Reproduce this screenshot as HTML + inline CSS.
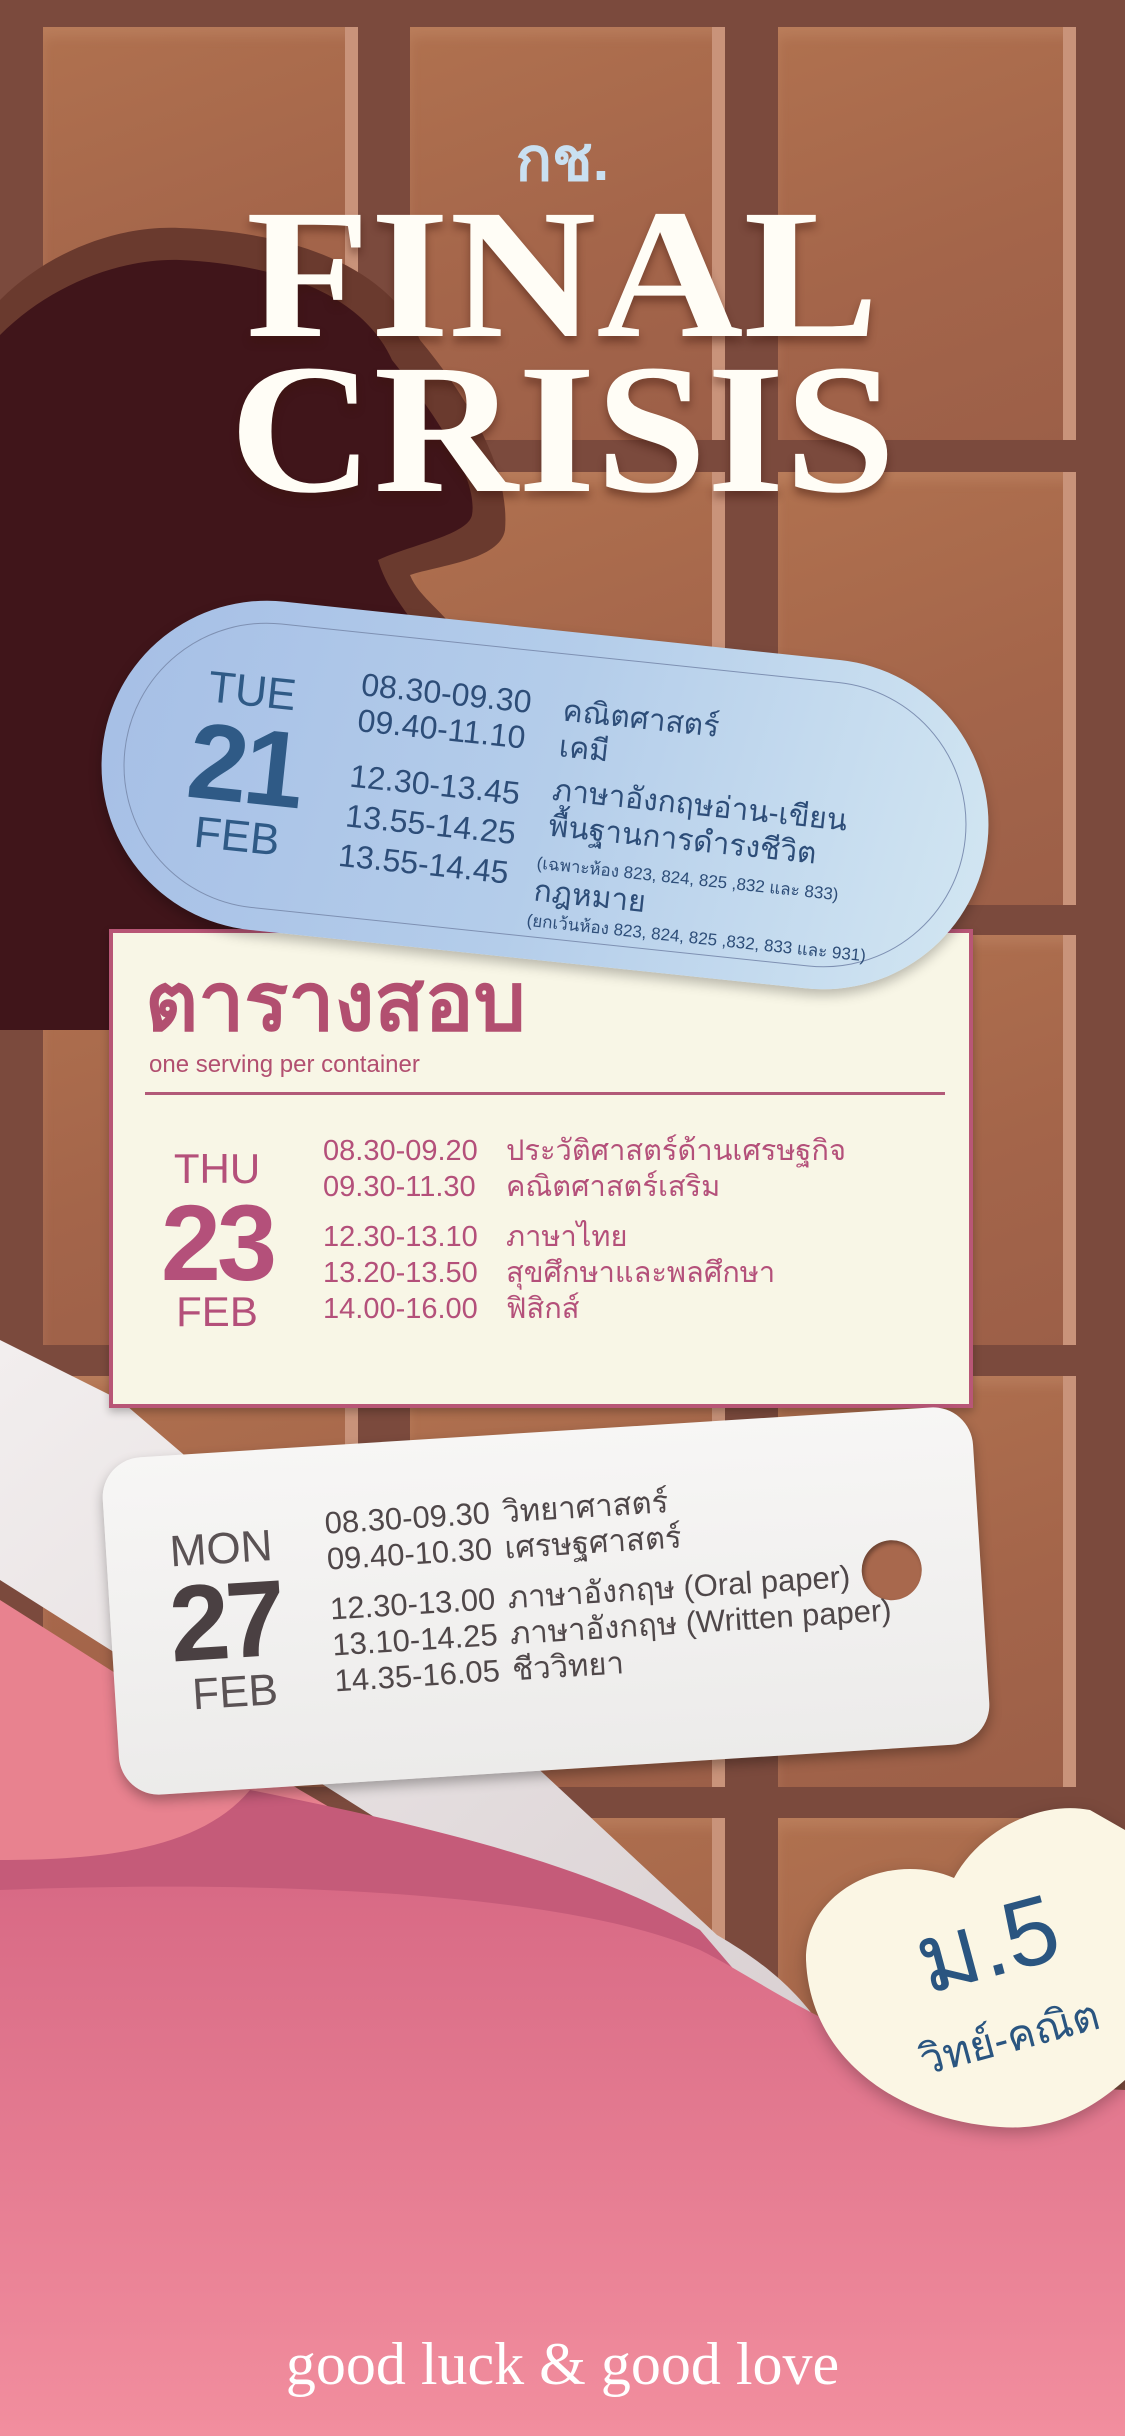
<!DOCTYPE html>
<html><head><meta charset="utf-8">
<style>
*{margin:0;padding:0;box-sizing:border-box}
body{width:1125px;height:2436px;overflow:hidden;position:relative;background:#7b4a3d;font-family:"Liberation Sans","DejaVu Sans",sans-serif}
.abs{position:absolute}
.pc{position:absolute;background:linear-gradient(160deg,#b0714f 0%,#a4654a 55%,#9c5f48 100%);box-shadow:inset -13px 0 0 #c9937a, inset 0 10px 12px rgba(255,210,180,.12)}
.t{position:absolute;white-space:nowrap}
</style></head><body>
<div class="pc" style="left:43px;top:27px;width:315px;height:413px"></div>
<div class="pc" style="left:410px;top:27px;width:315px;height:413px"></div>
<div class="pc" style="left:778px;top:27px;width:298px;height:413px"></div>
<div class="pc" style="left:43px;top:472px;width:315px;height:433px"></div>
<div class="pc" style="left:410px;top:472px;width:315px;height:433px"></div>
<div class="pc" style="left:778px;top:472px;width:298px;height:433px"></div>
<div class="pc" style="left:43px;top:935px;width:315px;height:410px"></div>
<div class="pc" style="left:410px;top:935px;width:315px;height:410px"></div>
<div class="pc" style="left:778px;top:935px;width:298px;height:410px"></div>
<div class="pc" style="left:43px;top:1376px;width:315px;height:411px"></div>
<div class="pc" style="left:410px;top:1376px;width:315px;height:411px"></div>
<div class="pc" style="left:778px;top:1376px;width:298px;height:411px"></div>
<div class="pc" style="left:43px;top:1818px;width:315px;height:400px"></div>
<div class="pc" style="left:410px;top:1818px;width:315px;height:400px"></div>
<div class="pc" style="left:778px;top:1818px;width:298px;height:400px"></div>

<svg class="abs" style="left:0;top:0" width="1125" height="2436" viewBox="0 0 1125 2436">
 <defs>
  <linearGradient id="pk" x1="0" y1="0" x2="0" y2="1">
   <stop offset="0" stop-color="#d86a85"/><stop offset="1" stop-color="#f28e9e"/>
  </linearGradient>
  <linearGradient id="rb" x1="0" y1="0" x2="1" y2="1">
   <stop offset="0" stop-color="#f2eeee"/><stop offset="1" stop-color="#d9d0d2"/>
  </linearGradient>
 </defs>
 <path d="M0 300 C50 250 120 225 180 228 C300 232 390 270 420 340 C470 400 510 470 505 530 C500 560 440 565 410 575 C420 600 450 615 460 640 L460 1030 L0 1030 Z" fill="#6a3a2e"/>
 <path d="M0 335 C50 285 120 258 180 260 C290 265 365 300 392 360 C440 420 478 480 472 515 C468 535 410 545 378 560 C390 600 420 625 430 650 L430 1030 L0 1030 Z" fill="#40151a"/>
 <path d="M0 1340 L120 1400 L400 1640 L717 1935 C760 1960 800 1990 830 2040 L600 1960 L0 1580 Z" fill="url(#rb)"/>
 <path d="M0 1600 L300 1790 L420 1860 L420 2436 L0 2436 Z" fill="#e8828f"/>
 <path d="M250 1790 C450 1830 600 1870 700 1930 L760 2000 L0 2000 L0 1860 C100 1860 200 1850 250 1790 Z" fill="#c55b79"/>
 <path d="M0 1890 C250 1880 560 1890 700 1950 C790 1995 880 2080 1125 2090 L1125 2436 L0 2436 Z" fill="url(#pk)"/>
 <g style="filter:drop-shadow(0 6px 8px rgba(0,0,0,.25))">
 <path d="M954 1878 C980 1830 1040 1800 1090 1810 L1125 1830 L1125 2080 C1080 2120 1040 2130 1000 2127 C900 2120 810 2060 806 1960 C805 1890 890 1850 954 1878 Z" fill="#fbf6e4"/>
 </g>
</svg>

<div class="t" style="left:0;width:1125px;text-align:center;top:112px;font-size:60px;font-weight:bold;color:#c9e0f1">กช.</div>
<div class="t" style="left:0;width:1125px;text-align:center;top:195px;font-family:'Liberation Serif',serif;font-weight:bold;font-size:185px;line-height:160px;color:#fffdf6;text-shadow:0 6px 8px rgba(60,20,10,.45);transform:scaleX(1.1)">FINAL</div>
<div class="t" style="left:0;width:1125px;text-align:center;top:350px;font-family:'Liberation Serif',serif;font-weight:bold;font-size:185px;line-height:160px;color:#fffdf6;text-shadow:0 6px 8px rgba(60,20,10,.45);transform:scaleX(1.08)">CRISIS</div>

<div class="abs" style="left:109px;top:929px;width:864px;height:479px;background:#f8f6e6;border:4px solid #b85676;box-shadow:0 4px 8px rgba(0,0,0,.25)">
 <div class="t" style="left:32px;top:20px;font-size:82px;font-weight:bold;color:#b24f70;line-height:100px">ตารางสอบ</div>
 <div class="t" style="left:36px;top:118px;font-size:24px;color:#b24f70">one serving per container</div>
 <div class="abs" style="left:32px;top:159px;width:800px;height:3px;background:#b25a78"></div>
 <div class="t" style="left:0;width:208px;text-align:center;top:212px;font-size:42px;color:#b4507a">THU</div>
 <div class="t" style="left:0;width:208px;text-align:center;top:250px;font-size:108px;font-weight:bold;color:#b4507a;line-height:120px;letter-spacing:-4px">23</div>
 <div class="t" style="left:0;width:208px;text-align:center;top:355px;font-size:42px;color:#b4507a">FEB</div>
 <div class="t" style="left:210px;top:200px;font-size:29px;color:#b4507a;line-height:36px">08.30-09.20<br>09.30-11.30</div>
 <div class="t" style="left:210px;top:286px;font-size:29px;color:#b4507a;line-height:36px">12.30-13.10<br>13.20-13.50<br>14.00-16.00</div>
 <div class="t" style="left:393px;top:200px;font-size:29px;color:#b4507a;line-height:36px">ประวัติศาสตร์ด้านเศรษฐกิจ<br>คณิตศาสตร์เสริม</div>
 <div class="t" style="left:393px;top:286px;font-size:29px;color:#b4507a;line-height:36px">ภาษาไทย<br>สุขศึกษาและพลศึกษา<br>ฟิสิกส์</div>
</div>

<div class="abs" style="left:100px;top:630px;width:890px;height:330px;border-radius:165px;background:linear-gradient(100deg,#a6bfe6 0%,#b4cdea 50%,#d2e6f2 100%);transform:rotate(6deg);box-shadow:0 6px 12px rgba(0,0,0,.25)">
 <div class="abs" style="left:22px;top:22px;right:22px;bottom:22px;border-radius:145px;border:1.5px solid #7e90b2"></div>
 <div class="t" style="left:73px;width:140px;text-align:center;top:68px;font-size:44px;color:#2f5a86">TUE</div>
 <div class="t" style="left:73px;width:140px;text-align:center;top:108px;font-size:108px;font-weight:bold;color:#2f5a86;line-height:118px;letter-spacing:-4px">21</div>
 <div class="t" style="left:73px;width:140px;text-align:center;top:214px;font-size:44px;color:#2f5a86">FEB</div>
 <div class="t" style="left:251px;top:56px;font-size:32px;color:#2d4d78;line-height:36px">08.30-09.30<br>09.40-11.10</div>
 <div class="t" style="left:249px;top:146px;font-size:32px;color:#2d4d78;line-height:40px">12.30-13.45<br>13.55-14.25</div>
 <div class="t" style="left:246px;top:228px;font-size:32px;color:#2d4d78">13.55-14.45</div>
 <div class="t" style="left:454px;top:62px;font-size:30px;color:#2d4d78;line-height:36px">คณิตศาสตร์<br>เคมี</div>
 <div class="t" style="left:452px;top:142px;font-size:30px;color:#2d4d78;line-height:36px">ภาษาอังกฤษอ่าน-เขียน<br>พื้นฐานการดำรงชีวิต</div>
 <div class="t" style="left:444px;top:220px;font-size:17px;color:#2d4d78">(เฉพาะห้อง 823, 824, 825 ,832 และ 833)</div>
 <div class="t" style="left:444px;top:238px;font-size:30px;color:#2d4d78">กฎหมาย</div>
 <div class="t" style="left:440px;top:278px;font-size:17px;color:#2d4d78">(ยกเว้นห้อง 823, 824, 825 ,832, 833 และ 931)</div>
</div>

<div class="abs" style="left:110px;top:1432px;width:872px;height:338px;border-radius:40px;background:linear-gradient(180deg,#f7f6f5,#ecebea);transform:rotate(-3.6deg);box-shadow:0 6px 12px rgba(0,0,0,.3)">
 <div class="abs" style="left:753px;top:130px;width:60px;height:60px;border-radius:50%;background:#a8684d;box-shadow:inset 2px 3px 4px rgba(0,0,0,.35)"></div>
 <div class="t" style="left:40px;width:150px;text-align:center;top:72px;font-size:44px;color:#5a5254">MON</div>
 <div class="t" style="left:40px;width:150px;text-align:center;top:110px;font-size:108px;font-weight:bold;color:#4a4042;line-height:118px;letter-spacing:-4px">27</div>
 <div class="t" style="left:45px;width:150px;text-align:center;top:216px;font-size:44px;color:#5a5254">FEB</div>
 <div class="t" style="left:220px;top:60px;font-size:31px;color:#4f4749;line-height:36px">08.30-09.30<br>09.40-10.30</div>
 <div class="t" style="left:220px;top:146px;font-size:31px;color:#4f4749;line-height:36px">12.30-13.00<br>13.10-14.25<br>14.35-16.05</div>
 <div class="t" style="left:398px;top:60px;font-size:31px;color:#4f4749;line-height:36px">วิทยาศาสตร์<br>เศรษฐศาสตร์</div>
 <div class="t" style="left:398px;top:146px;font-size:31px;color:#4f4749;line-height:36px">ภาษาอังกฤษ (Oral paper)<br>ภาษาอังกฤษ (Written paper)<br>ชีววิทยา</div>
</div>

<div class="t" style="left:905px;top:1915px;font-size:96px;color:#2a5580;transform:rotate(-15deg);transform-origin:left top;line-height:100px">ม.5</div>
<div class="t" style="left:912px;top:2030px;font-size:42px;color:#2a5580;transform:rotate(-15deg);transform-origin:left top">วิทย์-คณิต</div>

<div class="t" style="left:0;width:1125px;text-align:center;top:2330px;font-family:'Liberation Serif',serif;font-size:60px;color:#fff">good luck &amp; good love</div>
</body></html>
